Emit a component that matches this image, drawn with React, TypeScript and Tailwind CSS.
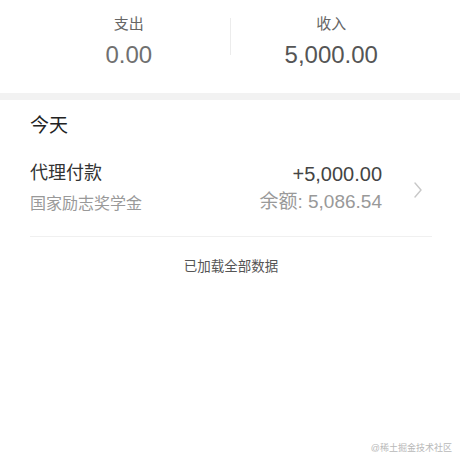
import React from "react";

const FONT = {
  fontFamily: '"Liberation Sans", "Noto Sans CJK SC", sans-serif',
};

export default function App() {
  return (
    <div
      className="relative h-[460px] w-[460px] overflow-hidden bg-white"
      style={FONT}
    >
      {/* summary */}
      <div className="flex h-[93px] items-start px-[28px] pt-[14px]">
        <div className="flex flex-1 flex-col items-center">
          <div className="text-[15px] leading-[20px] text-[#666]">支出</div>
          <div className="mt-[6px] text-[24px] leading-[30px] text-[#707070]">0.00</div>
        </div>
        <div className="mt-[4px] h-[37px] w-px bg-[#ececec]" />
        <div className="flex flex-1 flex-col items-center">
          <div className="text-[15px] leading-[20px] text-[#666]">收入</div>
          <div className="mt-[6px] text-[24px] leading-[30px] text-[#555]">5,000.00</div>
        </div>
      </div>
      <div className="h-[7px] bg-[#f2f2f2]" />

      {/* list */}
      <div className="pl-[30px] pr-[28px] pt-[13px]">
        <div className="text-[19px] leading-[26px] text-[#222]">今天</div>
        <div className="mt-[21px] flex items-start border-b border-[#f0f0f0] pb-[20px]">
          <div className="flex flex-1 flex-col">
            <div className="text-[18px] leading-[26px] text-[#333]">代理付款</div>
            <div className="mt-[6px] text-[16px] leading-[24px] text-[#999]">
              国家励志奖学金
            </div>
          </div>
          <div className="mt-[1px] flex flex-col items-end">
            <div className="text-[20px] leading-[26px] text-[#444]">+5,000.00</div>
            <div className="mt-[3px] text-[19px] leading-[24px] text-[#999]">
              余额: 5,086.54
            </div>
          </div>
          <div className="ml-[32px] mr-[10px] mt-[22px] w-[8px]">
            <svg width="8" height="16" viewBox="0 0 8 16" fill="none">
              <path
                d="M1 1 L7 8 L1 15"
                stroke="#c8c8c8"
                strokeWidth="1.4"
                strokeLinecap="round"
                strokeLinejoin="round"
              />
            </svg>
          </div>
        </div>
        <div className="mt-[20px] text-center text-[13.5px] leading-[20px] text-[#555]">
          已加载全部数据
        </div>
      </div>

      <div className="absolute bottom-[5px] right-[8px] text-[9px] leading-[14px] text-[#b8b8b8]">
        @稀土掘金技术社区
      </div>
    </div>
  );
}
